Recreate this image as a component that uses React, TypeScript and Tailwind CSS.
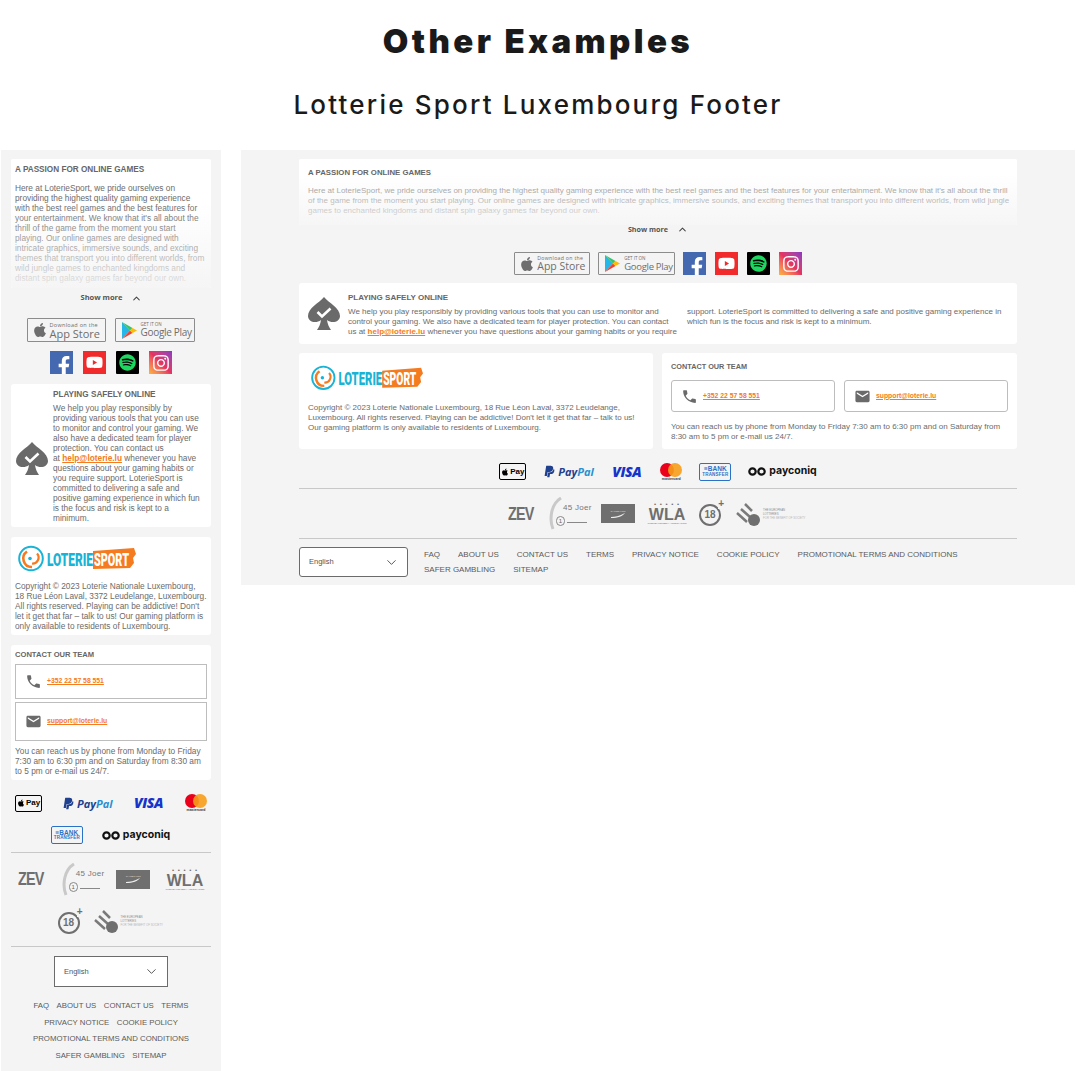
import React from 'react';
import { ChevronDown, ChevronUp } from 'lucide-react';
import { FaApple, FaSpotify, FaInstagram, FaFacebookF, FaYoutube, FaPaypal } from 'react-icons/fa';
import { MdEmail, MdPhone } from 'react-icons/md';

const helpLink = <span className="font-bold text-[#f47b20] underline">help@loterie.lu</span>;

const Lines = ({ lines, className }: { lines: React.ReactNode[]; className: string }) => (
  <p className={className}>
    {lines.map((line, i) => (
      <span key={i} className="block whitespace-nowrap">{line}</span>
    ))}
  </p>
);

const Heading = ({ size, children }: { size: string; children: React.ReactNode }) => (
  <h3 className={`${size} leading-[10px] font-bold text-[#666] uppercase whitespace-nowrap`}>{children}</h3>
);

const ShowMore = ({ className }: { className: string }) => (
  <div className={`flex items-center justify-center gap-[9px] font-['Open_Sans',sans-serif] font-bold text-[#555] ${className}`}>
    <span>Show more</span>
    <ChevronUp size={11} strokeWidth={2.2} className="text-[#444]" />
  </div>
);

const GooglePlay = () => (
  <svg width="15" height="17" viewBox="0 0 15 17" className="shrink-0">
    <polygon points="0,0 8,8.5 0,17" fill="#25b7e8" />
    <polygon points="0,0 10.5,6 8,8.5" fill="#35c46b" />
    <polygon points="0,17 10.5,11 8,8.5" fill="#ea4335" />
    <polygon points="10.5,6 15,8.5 10.5,11 8,8.5" fill="#fbbc05" />
  </svg>
);

const StoreBadges = ({ wide }: { wide?: boolean }) => (
  <>
    <div className={`flex items-center gap-[2px] border border-[#8c8c8c] rounded-[1px] pl-[4px] text-[#6e6e6e] whitespace-nowrap ${wide ? 'w-[79px] h-[24px]' : 'w-[76px] h-[23px]'}`}>
      <FaApple size={16} className="shrink-0" />
      <div className="flex flex-col font-['Open_Sans',sans-serif]">
        <span className={`leading-[6px] tracking-[0.3px] ${wide ? 'text-[5.5px]' : 'text-[5.2px]'}`}>Download on the</span>
        <span className={`leading-[11px] ${wide ? 'text-[11px]' : 'text-[10.5px]'}`}>App Store</span>
      </div>
    </div>
    <div className={`flex items-center gap-[4px] border border-[#8c8c8c] rounded-[1px] pl-[6px] text-[#6e6e6e] ${wide ? 'w-[80px] h-[24px]' : 'w-[77px] h-[23px]'}`}>
      <GooglePlay />
      <div className="flex flex-col font-['Open_Sans',sans-serif]">
        <span className="text-[4.5px] leading-[5px]">GET IT ON</span>
        <span className={`leading-[11px] tracking-[-0.3px] whitespace-nowrap ${wide ? 'text-[10px]' : 'text-[9.500px]'}`}>Google Play</span>
      </div>
    </div>
  </>
);

const Socials = ({ gap, box }: { gap: string; box: string }) => (
  <div className={`flex ${gap}`}>
    <div className={`${box} bg-[#4469b0] flex items-end justify-center overflow-hidden`}>
      <FaFacebookF size={20} className="text-white translate-x-[2px] translate-y-[2px]" />
    </div>
    <div className={`${box} bg-[#f12b2b] flex items-center justify-center`}>
      <FaYoutube size={17} className="text-white" />
    </div>
    <div className={`${box} bg-black rounded-[1px] flex items-center justify-center`}>
      <FaSpotify size={17} className="text-[#1ed760]" />
    </div>
    <div className={`${box} bg-gradient-to-tr from-[#fdb43c] via-[#e5325f] to-[#8a35c4] flex items-center justify-center`}>
      <FaInstagram size={18} className="text-white" />
    </div>
  </div>
);

const Spade = () => (
  <svg width="32" height="33" viewBox="0 0 32 33" className="shrink-0">
    <path d="M16 0 C21 6 32 11 32 19 C32 25 24 27 19 23 C19.500 27 21 30 23 33 L9 33 C11 30 12.500 27 13 23 C8 27 0 25 0 19 C0 11 11 6 16 0 Z" fill="#6a6a6a" />
    <path d="M9.500 15 L14 19.500 L22.500 11.500" fill="none" stroke="#fff" strokeWidth="2.600" />
  </svg>
);

const Logo = ({ width }: { width: number }) => (
  <svg width={width} viewBox="0 0 118 27" className="block ml-[3px]">
    <circle cx="13" cy="13.500" r="11.800" fill="none" stroke="#19b3d6" strokeWidth="2" />
    <path d="M9 6.500 A8.500 8.500 0 0 0 14 22" fill="none" stroke="#f47b20" strokeWidth="2.600" />
    <path d="M19 8.500 A6 6 0 0 1 14 18.500" fill="none" stroke="#f47b20" strokeWidth="2.200" />
    <circle cx="12" cy="13.500" r="1.800" fill="#19b3d6" />
    <path d="M75 6 L116 3 L118 9 L115 13 L116 18 L112 23 L75 24 Z" fill="#f47b20" />
    <text x="29" y="21" textLength="46" lengthAdjust="spacingAndGlyphs" fontFamily="Roboto, sans-serif" fontWeight="900" fontSize="19" fill="#19b3d6">LOTERIE</text>
    <text x="76" y="21" textLength="35" lengthAdjust="spacingAndGlyphs" fontFamily="Roboto, sans-serif" fontWeight="900" fontSize="19" fill="#fff">SPORT</text>
  </svg>
);

const ContactBox = ({ kind, className }: { kind: 'phone' | 'mail'; className: string }) => (
  <div className={`flex items-center border border-[#bdbdbd] ${className}`}>
    <div className="w-[15px] flex justify-center text-[#6a6a6a]">
      {kind === 'phone' ? <MdPhone size={17} className="shrink-0" /> : <MdEmail size={17} className="shrink-0" />}
    </div>
    <span className="ml-[6px] text-[6.8px] font-bold text-[#f47b20] underline">
      {kind === 'phone' ? '+352 22 57 58 551' : 'support@loterie.lu'}
    </span>
  </div>
);

const ApplePay = () => (
  <div className="w-[27px] h-[17px] border border-black rounded-[2px] flex items-center justify-center gap-[1px] text-[8px] font-semibold text-black">
    <FaApple size={8} />
    <span>Pay</span>
  </div>
);

const PayPal = () => (
  <div className="flex items-center gap-[2px] w-[52px]">
    <FaPaypal size={13} className="text-[#1f3f8f] shrink-0" />
    <span className="font-['Open_Sans',sans-serif] text-[11px] font-bold italic leading-none">
      <span className="text-[#1f3f8f]">Pay</span>
      <span className="text-[#2a8fd0]">Pal</span>
    </span>
  </div>
);

const Visa = () => (
  <span className="font-['Open_Sans',sans-serif] text-[14px] leading-none font-extrabold italic text-[#1434cb] w-[31px] tracking-[-0.4px]">VISA</span>
);

const Mastercard = () => (
  <div className="flex flex-col items-center w-[22px]">
    <div className="flex">
      <div className="w-[14px] h-[14px] rounded-full bg-[#eb001b]" />
      <div className="w-[14px] h-[14px] rounded-full bg-[#f79e1b]/90 -ml-[6px]" />
    </div>
    <span className="text-[3.500px] leading-[4px] font-bold text-[#333]">mastercard</span>
  </div>
);

const BankTransfer = () => (
  <div className="w-[32px] h-[18px] border border-[#2a72c8] rounded-[2px] flex flex-col items-center justify-center text-[#2a72c8] font-bold leading-none">
    <span className="text-[6.500px]">≡BANK</span>
    <span className="text-[4.500px] tracking-[0.2px]">TRANSFER</span>
  </div>
);

const Payconiq = () => (
  <div className="flex items-center gap-[3px] text-[#111]">
    <svg width="18" height="9" viewBox="0 0 18 9">
      <circle cx="4.500" cy="4.500" r="3.200" fill="none" stroke="#111" strokeWidth="2.200" />
      <circle cx="13.500" cy="4.500" r="3.200" fill="none" stroke="#111" strokeWidth="2.200" />
    </svg>
    <span className="font-['Inter',sans-serif] text-[10.5px] leading-none font-bold">payconiq</span>
  </div>
);

const Zev = () => (
  <div className="w-[27px] shrink-0">
    <span className="block origin-left scale-x-[0.8] font-['Liberation_Sans',sans-serif] text-[18px] leading-none font-bold tracking-[-1px] text-[#6f6f6f]">ZEV</span>
  </div>
);

const Joer = () => (
  <div className="relative w-[40px] h-[33px] shrink-0">
    <svg width="14" height="33" viewBox="0 0 14 33" className="absolute left-0 top-0">
      <path d="M13 1 C3 7 1 22 5 32" fill="none" stroke="#c9c9c9" strokeWidth="3" />
    </svg>
    <span className="absolute left-[15px] top-[6px] text-[8px] leading-[9px] tracking-[0.3px] text-[#777] whitespace-nowrap">45 Joer</span>
    <div className="absolute left-[8px] top-[19px] w-[9px] h-[10px] rounded-full border border-[#888] flex items-center justify-center text-[6px] leading-none text-[#666]">1</div>
    <div className="absolute left-[19px] top-[25px] w-[20px] h-px bg-[#888]" />
  </div>
);

const GrayRect = () => (
  <div className="w-[34px] h-[19px] bg-[#6f6f6f] flex flex-col items-center justify-center shrink-0">
    <span className="text-[2.500px] leading-[3px] text-[#ddd]">GAMES FOR</span>
    <svg width="16" height="5" viewBox="0 0 16 5">
      <path d="M1 4 C5 4 9 3 15 0 C13 3 8 5 1 5 Z" fill="#eee" />
    </svg>
  </div>
);

const Wla = () => (
  <div className="flex flex-col items-center w-[38px] shrink-0 text-[#6f6f6f]">
    <span className="text-[6px] leading-[5px] tracking-[1px]">• • • • •</span>
    <span className="font-['Liberation_Sans',sans-serif] text-[16px] leading-[15px] font-bold">WLA</span>
    <span className="text-[2.500px] leading-[3px] whitespace-nowrap">WORLD LOTTERY ASSOCIATION</span>
  </div>
);

const EighteenPlus = () => (
  <div className="relative w-[24px] h-[25px] shrink-0">
    <div className="absolute left-0 bottom-0 w-[22px] h-[22px] rounded-full border-[2px] border-[#6f6f6f] flex items-center justify-center text-[10px] font-bold text-[#6f6f6f] leading-none">18</div>
    <span className="absolute right-[-1px] top-[-2px] bg-[#f4f4f4] text-[10px] leading-[10px] font-bold text-[#6f6f6f]">+</span>
  </div>
);

const EuropeanLotteries = () => (
  <div className="flex items-center gap-[2px] w-[70px] shrink-0">
    <svg width="25" height="24" viewBox="0 0 25 24" className="shrink-0">
      <path d="M1 11 L11 20 M5 7 L14 15 M9 2 L16 9" stroke="#7a7a7a" strokeWidth="2.500" fill="none" />
      <circle cx="18" cy="18" r="6" fill="#6f6f6f" />
    </svg>
    <div className="flex flex-col text-[#8b8b8b] text-[2.800px] leading-[4px] whitespace-nowrap">
      <span>THE EUROPEAN</span>
      <span>LOTTERIES</span>
      <span className="text-[#b5b5b5]">FOR THE BENEFIT OF SOCIETY</span>
    </div>
  </div>
);

const LangSelect = ({ className }: { className: string }) => (
  <div className={`flex items-center justify-between bg-white pl-[9px] pr-[8px] text-[7.500px] font-medium text-[#555] ${className}`}>
    <span>English</span>
    <ChevronDown size={15} strokeWidth={1.300} className="text-[#333]" />
  </div>
);

const mobileBody = 'text-[8.3px] leading-[10px] text-[#6b6b6b]';
const desktopBody = 'text-[8px] leading-[10px] text-[#6b6b6b]';
const mobileLink = 'text-[7.8px] leading-[10px] font-medium text-[#5a5a5a] uppercase whitespace-nowrap';
const desktopLink = 'text-[8px] leading-[10px] font-medium text-[#5a5a5a] uppercase whitespace-nowrap';

function MobileFooter() {
  return (
    <aside className="w-[220px] h-[921px] ml-px bg-[#f4f4f4] px-[10px] pt-[9px] shrink-0">
      <div className="relative bg-white rounded-[2px] px-[4px] pt-[6px] h-[129px] overflow-hidden">
        <Heading size="text-[8.2px]">A passion for online games</Heading>
        <Lines
          className={`${mobileBody} mt-[8px]`}
          lines={[
            'Here at LoterieSport, we pride ourselves on',
            'providing the highest quality gaming experience',
            'with the best reel games and the best features for',
            "your entertainment. We know that it's all about the",
            'thrill of the game from the moment you start',
            'playing. Our online games are designed with',
            'intricate graphics, immersive sounds, and exciting',
            'themes that transport you into different worlds, from',
            'wild jungle games to enchanted kingdoms and',
            'distant spin galaxy games far beyond our own.',
          ]}
        />
        <div className="absolute inset-x-0 bottom-0 h-[85px] bg-gradient-to-b from-[#f4f4f4]/0 to-[#f4f4f4]/90" />
      </div>
      <ShowMore className="h-[20px] -mr-[1px] text-[7.5px]" />
      <div className="flex justify-center gap-[9px] mt-[10px] -ml-[1px]">
        <StoreBadges wide />
      </div>
      <div className="flex justify-center mt-[9px]">
        <Socials gap="gap-[10px]" box="w-[23px] h-[23px]" />
      </div>
      <div className="flex items-center gap-[5px] bg-white rounded-[3px] pl-[5px] pr-[4px] pt-[6px] h-[143px] mt-[10px]">
        <Spade />
        <div className="self-start">
          <Heading size="text-[8.2px]">Playing safely online</Heading>
          <Lines
            className={`${mobileBody} mt-[3px]`}
            lines={[
              'We help you play responsibly by',
              'providing various tools that you can use',
              'to monitor and control your gaming. We',
              'also have a dedicated team for player',
              'protection. You can contact us',
              <>at {helpLink} whenever you have</>,
              'questions about your gaming habits or',
              'you require support. LoterieSport is',
              'committed to delivering a safe and',
              'positive gaming experience in which fun',
              'is the focus and risk is kept to a',
              'minimum.',
            ]}
          />
        </div>
      </div>
      <div className="bg-white rounded-[3px] px-[4px] pt-[8px] h-[98px] mt-[10px]">
        <Logo width={118} />
        <Lines
          className={`${mobileBody} mt-[9px]`}
          lines={[
            'Copyright © 2023 Loterie Nationale Luxembourg,',
            '18 Rue Léon Laval, 3372 Leudelange, Luxembourg.',
            "All rights reserved. Playing can be addictive! Don't",
            'let it get that far – talk to us! Our gaming platform is',
            'only available to residents of Luxembourg.',
          ]}
        />
      </div>
      <div className="bg-white rounded-[3px] px-[4px] pt-[5px] h-[135px] mt-[10px]">
        <Heading size="text-[7.6px]">Contact our team</Heading>
        <ContactBox kind="phone" className="h-[35px] mt-[4px] pl-[10px]" />
        <ContactBox kind="mail" className="h-[39px] mt-[3px] pl-[10px]" />
        <Lines
          className={`${mobileBody} mt-[5px]`}
          lines={[
            'You can reach us by phone from Monday to Friday',
            '7:30 am to 6:30 pm and on Saturday from 8:30 am',
            'to 5 pm or e-mail us 24/7.',
          ]}
        />
      </div>
      <div className="flex items-center justify-between px-[4px] mt-[14px] h-[18px]">
        <ApplePay />
        <PayPal />
        <Visa />
        <Mastercard />
      </div>
      <div className="flex items-center justify-center gap-[19px] mt-[14px] h-[18px] pr-[1px]">
        <BankTransfer />
        <Payconiq />
      </div>
      <div className="h-px bg-[#c8c8c8] mt-[8px]" />
      <div className="flex items-center justify-between pl-[7px] pr-[7px] mt-[9px] h-[34px]">
        <Zev />
        <Joer />
        <GrayRect />
        <Wla />
      </div>
      <div className="flex items-center justify-center gap-[12px] mt-[12px] h-[26px] -ml-[1px]">
        <EighteenPlus />
        <EuropeanLotteries />
      </div>
      <div className="h-px bg-[#c8c8c8] mt-[12px]" />
      <LangSelect className="w-[114px] h-[31px] mx-auto mt-[9px] border border-[#6b6b6b]" />
      <div className="flex flex-col items-center gap-[6.500px] mt-[14px]">
        <div className="flex gap-[7.500px]">
          <span className={mobileLink}>FAQ</span>
          <span className={mobileLink}>About us</span>
          <span className={mobileLink}>Contact us</span>
          <span className={mobileLink}>Terms</span>
        </div>
        <div className="flex gap-[7.500px]">
          <span className={mobileLink}>Privacy notice</span>
          <span className={mobileLink}>Cookie policy</span>
        </div>
        <span className={mobileLink}>Promotional terms and conditions</span>
        <div className="flex gap-[7.500px]">
          <span className={mobileLink}>Safer gambling</span>
          <span className={mobileLink}>Sitemap</span>
        </div>
      </div>
    </aside>
  );
}

function DesktopFooter() {
  return (
    <section className="w-[834px] h-[435px] ml-[20px] bg-[#f4f4f4] px-[58px] pt-[9px] shrink-0">
      <div className="relative bg-white rounded-[2px] px-[9px] pt-[9px] h-[66px] overflow-hidden">
        <Heading size="text-[7.8px]">A passion for online games</Heading>
        <Lines
          className="text-[8px] leading-[10px] text-[#8e8e8e] mt-[8px]"
          lines={[
            "Here at LoterieSport, we pride ourselves on providing the highest quality gaming experience with the best reel games and the best features for your entertainment. We know that it's all about the thrill",
            'of the game from the moment you start playing. Our online games are designed with intricate graphics, immersive sounds, and exciting themes that transport you into different worlds, from wild jungle',
            'games to enchanted kingdoms and distant spin galaxy games far beyond our own.',
          ]}
        />
        <div className="absolute inset-x-0 bottom-0 h-[50px] bg-gradient-to-b from-[#f4f4f4]/0 to-[#f4f4f4]/85" />
      </div>
      <ShowMore className="h-[9px] text-[7.2px]" />
      <div className="flex justify-center items-center gap-[8px] mt-[18px]">
        <StoreBadges />
        <Socials gap="gap-[9.500px]" box="w-[22.500px] h-[22.500px]" />
      </div>
      <div className="flex items-center bg-white rounded-[3px] pl-[9px] h-[61px] mt-[8px]">
        <Spade />
        <div className="ml-[8px] self-start pt-[10px]">
          <Heading size="text-[8px]">Playing safely online</Heading>
          <div className="flex gap-[15px] mt-[4px]">
            <Lines
              className={`${desktopBody} w-[324px]`}
              lines={[
                'We help you play responsibly by providing various tools that you can use to monitor and',
                'control your gaming. We also have a dedicated team for player protection. You can contact',
                <>us at {helpLink} whenever you have questions about your gaming habits or you require</>,
              ]}
            />
            <Lines
              className={`${desktopBody} w-[324px]`}
              lines={[
                'support. LoterieSport is committed to delivering a safe and positive gaming experience in',
                'which fun is the focus and risk is kept to a minimum.',
              ]}
            />
          </div>
        </div>
      </div>
      <div className="flex gap-[9px] mt-[9px]">
        <div className="w-[354px] h-[96px] bg-white rounded-[3px] px-[9px] pt-[12px]">
          <Logo width={112} />
          <Lines
            className={`${desktopBody} mt-[12px]`}
            lines={[
              'Copyright © 2023 Loterie Nationale Luxembourg, 18 Rue Léon Laval, 3372 Leudelange,',
              "Luxembourg. All rights reserved. Playing can be addictive! Don't let it get that far – talk to us!",
              'Our gaming platform is only available to residents of Luxembourg.',
            ]}
          />
        </div>
        <div className="w-[355px] h-[96px] bg-white rounded-[3px] px-[9px] pt-[9px]">
          <Heading size="text-[7.3px]">Contact our team</Heading>
          <div className="flex gap-[9px] mt-[8px]">
            <ContactBox kind="phone" className="w-[164px] h-[32px] rounded-[3px] pl-[10px]" />
            <ContactBox kind="mail" className="w-[164px] h-[32px] rounded-[3px] pl-[10px]" />
          </div>
          <Lines
            className={`${desktopBody} mt-[10px]`}
            lines={[
              'You can reach us by phone from Monday to Friday 7:30 am to 6:30 pm and on Saturday from',
              '8:30 am to 5 pm or e-mail us 24/7.',
            ]}
          />
        </div>
      </div>
      <div className="flex items-center justify-center gap-[17px] h-[19px] mt-[13px]">
        <ApplePay />
        <PayPal />
        <Visa />
        <Mastercard />
        <BankTransfer />
        <Payconiq />
      </div>
      <div className="h-px bg-[#c8c8c8] mt-[7px]" />
      <div className="flex items-center justify-center gap-[13px] h-[33px] mt-[8px] -ml-[2px]">
        <Zev />
        <Joer />
        <GrayRect />
        <Wla />
        <EighteenPlus />
        <EuropeanLotteries />
      </div>
      <div className="h-px bg-[#c8c8c8] mt-[8px]" />
      <div className="flex gap-[16px] mt-[8px]">
        <LangSelect className="w-[109px] h-[30px] rounded-[3px] border border-[#6b6b6b] shrink-0" />
        <div className="flex flex-wrap content-start gap-x-[18px] gap-y-[5px] pt-[3px]">
          {['FAQ', 'About us', 'Contact us', 'Terms', 'Privacy notice', 'Cookie policy', 'Promotional terms and conditions', 'Safer gambling', 'Sitemap'].map((label) => (
            <span key={label} className={desktopLink}>{label}</span>
          ))}
        </div>
      </div>
    </section>
  );
}

export default function App() {
  return (
    <div className="w-[1076px] h-[1071px] bg-white overflow-hidden font-['Liberation_Sans',Arial,sans-serif]">
      <header className="h-[150px] flex flex-col items-center text-[#1a1a1a] font-['Inter',sans-serif]">
        <h1 className="text-[33px] leading-[40px] font-black tracking-[3.400px] mt-[21px]">Other Examples</h1>
        <h2 className="text-[26px] leading-[32px] font-medium tracking-[2.200px] mt-[28px]">Lotterie Sport Luxembourg Footer</h2>
      </header>
      <div className="flex items-start">
        <MobileFooter />
        <DesktopFooter />
      </div>
    </div>
  );
}
